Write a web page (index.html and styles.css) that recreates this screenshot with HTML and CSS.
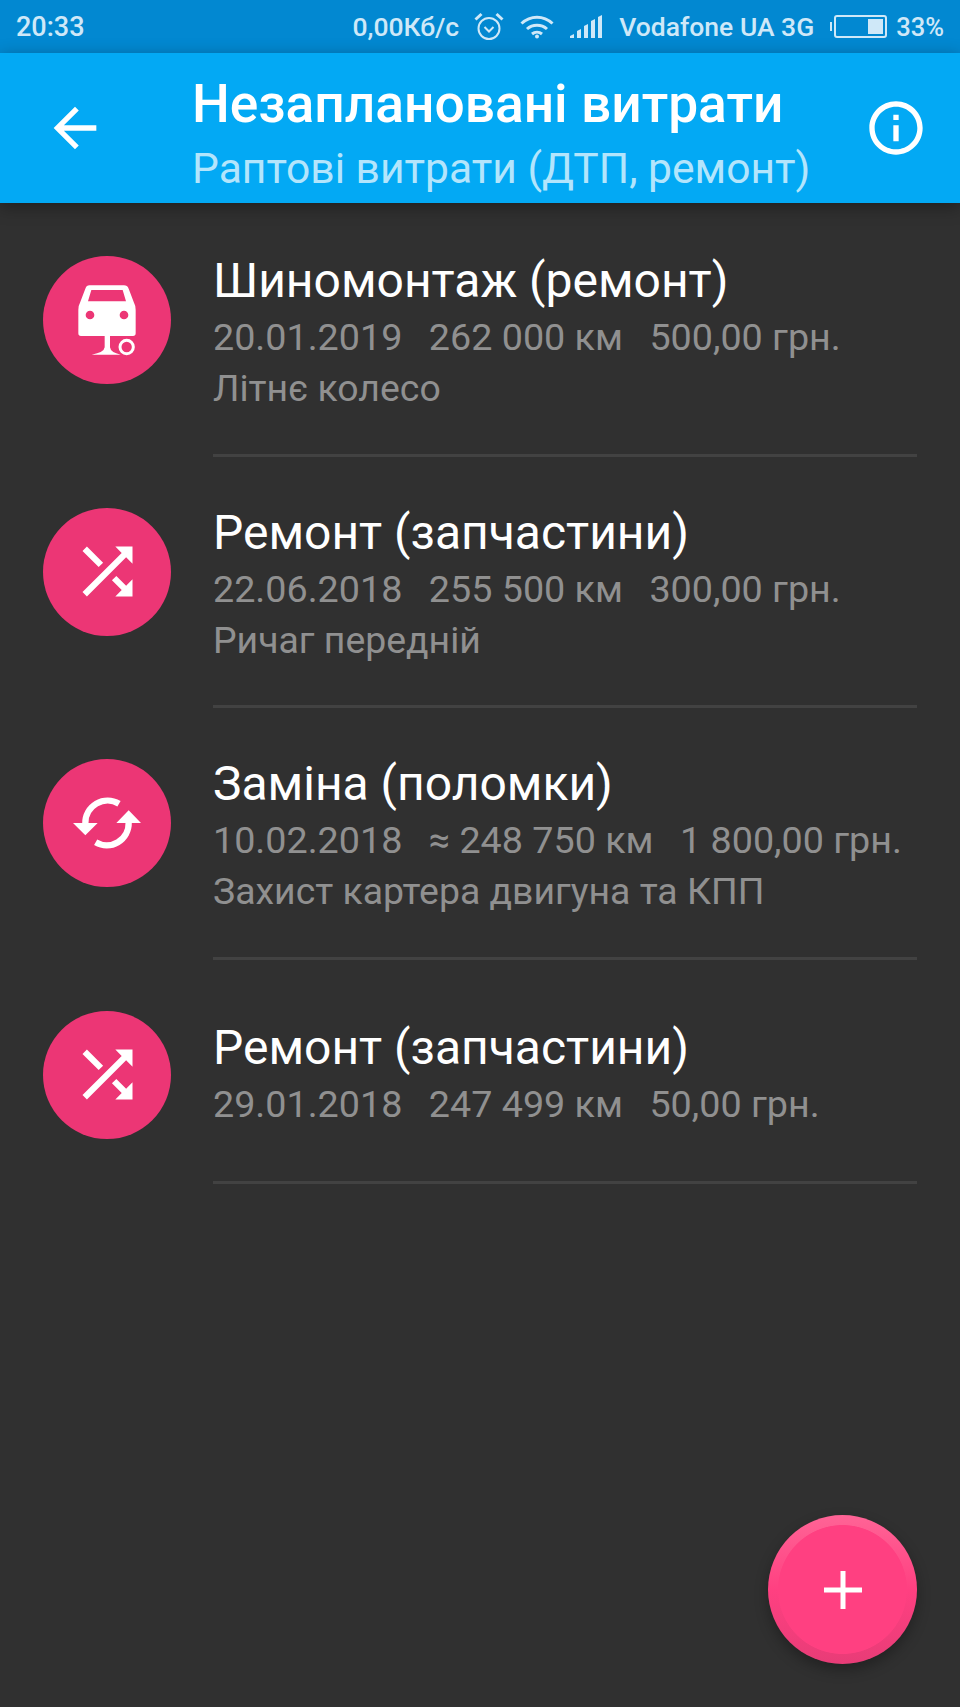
FILE: index.html
```html
<!DOCTYPE html>
<html>
<head>
    <meta http-equiv="Content-Type" content="text/html; charset=utf-8" />
    <title>Незаплановані витрати</title>
    <link rel="stylesheet" href="styles.css">
</head>
<body>
<div class="status">
    <span class="clock">20:33</span>
    <span class="speed">0,00Кб/с</span>
    <svg class="ic-alarm" width="30" height="30" viewBox="0 0 30 30" fill="none" stroke="#cfe8f8" stroke-width="2">
        <circle cx="15" cy="16.5" r="10.5"/>
        <path d="M10.5 15l4.5 4.5 4.5-4.5"/>
        <path d="M1.5 7.5l6-5.5M28.5 7.5l-6-5.5" stroke-width="3"/>
    </svg>
    <svg class="ic-wifi" width="34" height="24" viewBox="0 0 34 24" fill="none" stroke="#cfe8f8" stroke-width="3">
        <path d="M1.5 8.5c9-8.500 22-8.500 31 0"/>
        <path d="M7 14c5.500-5 14.500-5 20 0"/>
        <path d="M12 19c3-2.500 7-2.500 10 0"/>
        <circle cx="17" cy="21.500" r="2" fill="#cfe8f8" stroke="none"/>
    </svg>
    <svg class="ic-signal" width="33" height="23" viewBox="0 0 33 23" fill="#cfe8f8">
        <path d="M0 23v-2l4-2v4zM7 23v-7l4-2v9zM14 23V11l4-2v14zM21 23V6l4-2v19zM28 23V2l4-2v23z"/>
    </svg>
    <span class="carrier">Vodafone UA 3G</span>
    <span class="battery-nub"></span>
    <span class="battery"><span class="battery-fill"></span></span>
    <span class="percent">33%</span>
</div>
<div class="bar">
    <svg class="ic-back" width="64" height="64" viewBox="0 0 24 24" fill="#fff">
        <path d="M20 11H7.830l5.590-5.590L12 4l-8 8 8 8 1.410-1.410L7.830 13H20v-2z"/>
    </svg>
    <div class="bar-text">
        <div class="bar-title">Незаплановані витрати</div>
        <div class="bar-sub">Раптові витрати (ДТП, ремонт)</div>
    </div>
    <svg class="ic-info" width="64" height="64" viewBox="0 0 24 24" fill="#fff">
        <path d="M11 7h2v2h-2zm0 4h2v6h-2zm1-9C6.480 2 2 6.480 2 12s4.480 10 10 10 10-4.480 10-10S17.520 2 12 2zm0 18c-4.410 0-8-3.590-8-8s3.590-8 8-8 8 3.590 8 8-3.590 8-8 8z"/>
    </svg>
</div>
<div class="list">
    <div class="item">
        <div class="badge">
            <svg width="72" height="72" viewBox="123 132 216 216">
                <path fill="#fff" fill-rule="evenodd" d="M178 136H282Q292 136 296 146L312 188Q317 196 317 210V280Q317 288 309 288H153Q145 288 145 280V210Q145 196 150 188L166 146Q170 136 178 136ZM184 150L174 184H288L278 150ZM180 212A13 13 0 1 0 180 238A13 13 0 1 0 180 212ZM282 212A13 13 0 1 0 282 238A13 13 0 1 0 282 212Z"/>
                <path fill="#fff" d="M224 288H240V322Q242 338 272 344H185Q222 338 224 322Z"/>
                <circle cx="290" cy="321" r="20" fill="none" stroke="#fff" stroke-width="9"/>
            </svg>
        </div>
        <div class="body">
            <div class="name">Шиномонтаж (ремонт)</div>
            <div class="meta"><span>20.01.2019</span><span>262 000 км</span><span>500,00 грн.</span></div>
            <div class="note">Літнє колесо</div>
        </div>
    </div>
    <div class="item">
        <div class="badge">
            <svg width="75" height="75" viewBox="0 0 24 24" fill="#fff">
                <path d="M10.590 9.170L5.410 4 4 5.410l5.170 5.170 1.420-1.410zM14.500 4l2.040 2.040L4 18.590 5.410 20 17.960 7.460 20 9.500V4h-5.500zm.33 9.410l-1.410 1.410 3.130 3.130L14.500 20H20v-5.500l-2.040 2.040-3.130-3.130z"/>
            </svg>
        </div>
        <div class="body">
            <div class="name">Ремонт (запчастини)</div>
            <div class="meta"><span>22.06.2018</span><span>255 500 км</span><span>300,00 грн.</span></div>
            <div class="note">Ричаг передній</div>
        </div>
    </div>
    <div class="item">
        <div class="badge">
            <svg width="72" height="72" viewBox="122 127 216 216">
                <path fill="none" stroke="#fff" stroke-width="19" d="M266 177A67 67 0 0 0 165 236M196 293A66 66 0 0 0 295 234"/>
                <path fill="#fff" d="M128 235H202L165 272ZM258 235H332L295 197Z"/>
            </svg>
        </div>
        <div class="body">
            <div class="name">Заміна (поломки)</div>
            <div class="meta"><span>10.02.2018</span><span>≈ 248 750 км</span><span>1 800,00 грн.</span></div>
            <div class="note">Захист картера двигуна та КПП</div>
        </div>
    </div>
    <div class="item item-short">
        <div class="badge">
            <svg width="75" height="75" viewBox="0 0 24 24" fill="#fff">
                <path d="M10.590 9.170L5.410 4 4 5.410l5.170 5.170 1.420-1.410zM14.500 4l2.040 2.040L4 18.590 5.410 20 17.960 7.460 20 9.500V4h-5.500zm.33 9.410l-1.410 1.410 3.130 3.130L14.500 20H20v-5.500l-2.040 2.040-3.130-3.130z"/>
            </svg>
        </div>
        <div class="body">
            <div class="name">Ремонт (запчастини)</div>
            <div class="meta"><span>29.01.2018</span><span>247 499 км</span><span>50,00 грн.</span></div>
        </div>
    </div>
</div>
<div class="fab">
    <svg width="38" height="38" viewBox="0 0 38 38" fill="#fff"><path d="M16.500 0h5v16.500H38v5H21.500V38h-5V21.500H0v-5h16.500z"/></svg>
</div>
</body>
</html>
```

FILE: styles.css
```css
*{ margin: 0; padding: 0; box-sizing: border-box;}
html,body{ width: 960px; height: 1707px; overflow: hidden;}
body{ position: relative; background: #303030; font-family: Roboto, "Noto Sans", sans-serif; color: #fff;}

.status{ display: flex; align-items: center; height: 53px; padding: 0 16px; background: #0288d1; color: #cfe8f8; font-size: 26.5px; font-weight: 500;}
.clock{ margin-right: auto; font-size: 27px;}
.ic-alarm{ margin-left: 15px;}
.ic-wifi{ margin-left: 16px;}
.ic-signal{ margin-left: 16px;}
.carrier{ margin-left: 16px;}
.battery-nub{ width: 2px; height: 9px; margin-left: 16px; background: #cfe8f8;}
.battery{ display: flex; justify-content: flex-end; width: 53px; height: 23px; margin-left: 2px; padding: 2px; border: 2px solid #cfe8f8; border-radius: 3px;}
.battery-fill{ width: 15px; background: #cfe8f8;}
.percent{ margin-left: 9px; font-size: 25.5px;}

.bar{ display: flex; align-items: center; height: 150px; background: #03a9f4; box-shadow: 0 4px 16px rgba(0,0,0,.35); position: relative;}
.ic-back{ margin-left: 43px;}
.bar-text{ flex: 1; margin-left: 85px; padding-top: 16px;}
.bar-title{ font-size: 53.3px; line-height: 64px; font-weight: 500;}
.bar-sub{ font-size: 42.6px; line-height: 64px; color: #b3e5fc;}
.ic-info{ margin-right: 32px;}

.list{ padding-top: 2px;}
.item{ display: flex; padding-left: 43px;}
.badge{ display: flex; align-items: center; justify-content: center; flex: none; width: 128px; height: 128px; margin-top: 51px; border-radius: 50%; background: #ec3675;}
.body{ flex: 1; margin: 0 43px 0 42px; padding: 44px 0 41.5px; border-bottom: 3px solid #424242;}
.name{ font-size: 48px; line-height: 63px;}
.meta{ display: flex; gap: 26.5px; font-size: 37.7px; line-height: 50px; color: #909090;}
.note{ margin-top: 2px; font-size: 37.4px; line-height: 48px; color: #909090;}
.item-short .body{ padding: 56px 0 52px;}

.fab{ position: absolute; left: 768px; top: 1515px; display: flex; align-items: center; justify-content: center; width: 149px; height: 149px; border-radius: 50%; background: radial-gradient(circle closest-side, #ff4081 86%, transparent 87%), linear-gradient(#ff6496, #ff4081 50%, #e83c77); box-shadow: 0 6px 14px rgba(0,0,0,.3);}
```
